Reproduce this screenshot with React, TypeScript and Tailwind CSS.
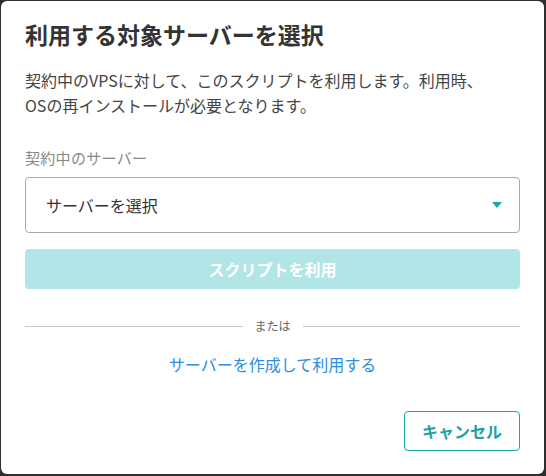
export default function App() {
  return (
    <div
      className="w-[546px] h-[476px] bg-[#2e2e2e] pt-px pl-px"
      style={{ fontFamily: '"Noto Sans CJK JP", "Noto Sans", sans-serif' }}
    >
      <div className="w-[543px] h-[473px] bg-white rounded-[6px] px-6 pt-[15px] flex flex-col">
        <h1 className="text-[23px] font-bold text-[#333] leading-[36px]">利用する対象サーバーを選択</h1>
        <p className="mt-[16px] text-[16px] text-[#444] leading-[25px]">
          契約中のVPSに対して、このスクリプトを利用します。利用時、
          <br />
          OSの再インストールが必要となります。
        </p>

        <label className="mt-[29px] text-[15px] text-[#888] leading-[22px] tracking-[0.3px]">契約中のサーバー</label>
        <div className="mt-[8px] h-[56px] border border-[#aaa] rounded-[4px] flex items-center justify-between pl-5 pr-4">
          <span className="text-[16px] text-[#333]">サーバーを選択</span>
          <svg width="12" height="8" viewBox="0 0 12 8">
            <path d="M1 1h10L6 7z" fill="#17a8a8" />
          </svg>
        </div>

        <button className="mt-4 h-[40px] w-full rounded-[4px] bg-[#b2e5e6] text-white font-bold text-[16px]">
          スクリプトを利用
        </button>

        <div className="mt-[29px] flex items-center gap-3">
          <div className="flex-1 h-px bg-[#c8c8c8]" />
          <span className="text-[12px] text-[#666] leading-[16px]">または</span>
          <div className="flex-1 h-px bg-[#c8c8c8]" />
        </div>

        <a className="mt-[18px] text-center text-[16px] text-[#2b8de3] leading-[24px]">サーバーを作成して利用する</a>

        <div className="mt-[35px] flex justify-end">
          <button className="w-[116px] h-[40px] border border-[#19a9ab] rounded-[4px] text-[#19a3a5] font-bold text-[16px]">
            キャンセル
          </button>
        </div>
      </div>
    </div>
  );
}
